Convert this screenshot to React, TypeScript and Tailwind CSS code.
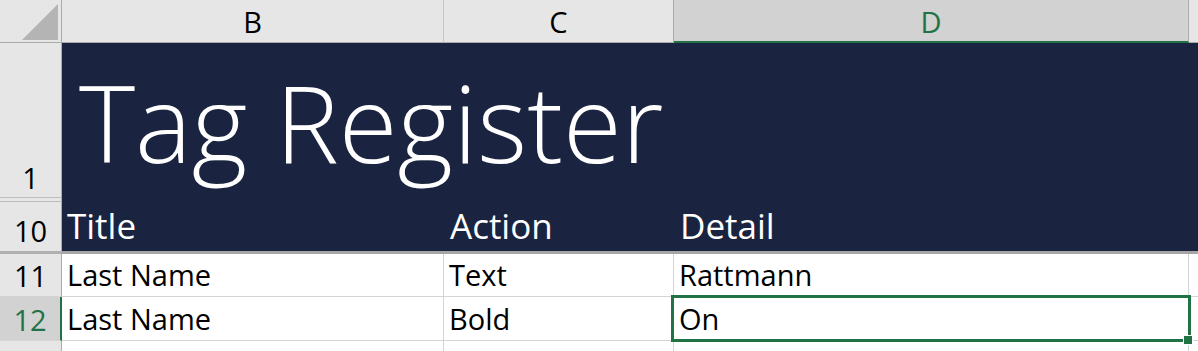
import React from "react";

const FONT = { fontFamily: '"Open Sans", "Noto Sans", "Liberation Sans", sans-serif' };

export default function App() {
  const navy = "bg-[#1a2440]";
  return (
    <div className="relative w-[1198px] h-[351px] overflow-hidden bg-white" style={FONT}>
      <div className="grid grid-cols-[62px_382px_230px_515px_1fr] grid-rows-[43px_155px_4px_52px_43px_44px_44px]">
        {/* Header row */}
        <div className="relative bg-[#e6e6e6] border-r border-b border-[#ababab]">
          <svg className="absolute left-[22px] top-[4px]" width="36" height="36" viewBox="0 0 36 36">
            <polygon points="0,36 36,0 36,36" fill="#b4b4b4" />
          </svg>
        </div>
        <div className="bg-[#e6e6e6] border-r border-b border-r-[#c6c6c6] border-b-[#ababab] flex items-end justify-center pb-[6px] text-[29px] leading-none text-black">B</div>
        <div className="bg-[#e6e6e6] border-r border-b border-r-[#ababab] border-b-[#ababab] flex items-end justify-center pb-[6px] text-[29px] leading-none text-black">C</div>
        <div className="bg-[#d2d2d2] border-r border-r-[#ababab] border-b-2 border-b-[#217346] flex items-end justify-center pb-[5px] text-[29px] leading-none text-[#217346]">D</div>
        <div className="bg-[#e6e6e6] border-b border-[#ababab]"></div>

        {/* Row 1 */}
        <div className="bg-[#e6e6e6] border-r border-r-[#ababab] border-b border-b-[#bdbdbd] flex items-end justify-center pb-[5px] text-[29px] leading-none text-black">1</div>
        <div className={`col-span-4 row-span-2 ${navy} flex items-end pl-[17px] pb-[27px]`}>
          <span className="text-[107px] leading-none font-light text-white whitespace-nowrap">Tag Register</span>
        </div>

        {/* Hidden rows gap */}
        <div className="bg-[#e6e6e6] border-r border-r-[#ababab] border-b border-b-[#bdbdbd]"></div>

        {/* Row 10 */}
        <div className="bg-[#e6e6e6] border-r border-r-[#ababab] border-b-[3px] border-b-[#b0b0b0] flex items-end justify-center pb-[6px] text-[29px] leading-none text-black">10</div>
        <div className={`${navy} border-b-[3px] border-b-[#a6a6a6] flex items-end pl-[5px] pb-[8px] text-[35px] leading-none text-white`}>Title</div>
        <div className={`${navy} border-b-[3px] border-b-[#a6a6a6] flex items-end pl-[6px] pb-[8px] text-[35px] leading-none text-white`}>Action</div>
        <div className={`${navy} border-b-[3px] border-b-[#a6a6a6] flex items-end pl-[6px] pb-[8px] text-[35px] leading-none text-white`}>Detail</div>
        <div className={`${navy} border-b-[3px] border-b-[#a6a6a6]`}></div>

        {/* Row 11 */}
        <div className="bg-[#e6e6e6] border-r border-r-[#ababab] border-b border-b-[#d4d4d4] flex items-end justify-center pb-[6px] text-[29px] leading-none text-black">11</div>
        <div className="border-r border-b border-[#d4d4d4] flex items-end pl-[5px] pb-[7px] text-[29px] leading-none text-black">Last Name</div>
        <div className="border-r border-b border-[#d4d4d4] flex items-end pl-[5px] pb-[7px] text-[29px] leading-none text-black">Text</div>
        <div className="border-r border-b border-[#d4d4d4] flex items-end pl-[5px] pb-[7px] text-[29px] leading-none text-black">Rattmann</div>
        <div className="border-b border-[#d4d4d4]"></div>

        {/* Row 12 */}
        <div className="bg-[#d2d2d2] border-r-2 border-r-[#217346] border-b border-b-[#d4d4d4] flex items-end justify-center pb-[6px] text-[29px] leading-none text-[#217346]">12</div>
        <div className="border-r border-b border-[#d4d4d4] flex items-end pl-[5px] pb-[7px] text-[29px] leading-none text-black">Last Name</div>
        <div className="border-r border-b border-[#d4d4d4] flex items-end pl-[5px] pb-[7px] text-[29px] leading-none text-black">Bold</div>
        <div className="border-r border-b border-[#d4d4d4] flex items-end pl-[5px] pb-[7px] text-[29px] leading-none text-black">On</div>
        <div className="border-b border-[#d4d4d4]"></div>

        {/* Row 13 */}
        <div className="bg-[#e6e6e6] border-r border-r-[#ababab]"></div>
        <div className="border-r border-[#d4d4d4]"></div>
        <div className="border-r border-[#d4d4d4]"></div>
        <div className="border-r border-[#d4d4d4]"></div>
        <div></div>
      </div>

      {/* Selection overlay */}
      <div className="absolute left-[671px] top-[295px] w-[520px] h-[47px] border-[3px] border-[#217346] pointer-events-none"></div>
      <div className="absolute left-[1183px] top-[335px] w-[10px] h-[10px] bg-[#217346] border border-white"></div>
    </div>
  );
}
